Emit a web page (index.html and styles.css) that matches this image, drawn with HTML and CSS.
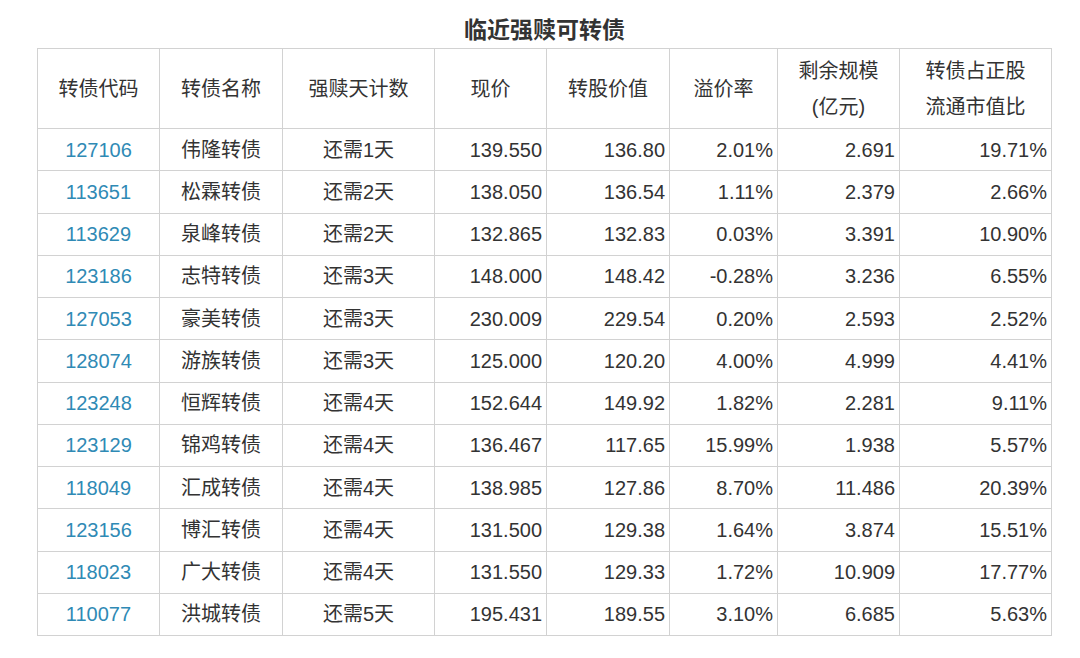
FILE: index.html
```html
<!DOCTYPE html>
<html lang="zh">
<head>
<meta charset="utf-8">
<title>临近强赎可转债</title>
<link rel="stylesheet" href="styles.css">
</head>
<body>
<div class="page">
  <div class="title">临近强赎可转债</div>
  <table class="bonds">
    <colgroup>
      <col class="c1"><col class="c2"><col class="c3"><col class="c4"><col class="c5"><col class="c6"><col class="c7"><col class="c8">
    </colgroup>
    <thead>
      <tr>
        <th>转债代码</th><th>转债名称</th><th>强赎天计数</th><th>现价</th><th>转股价值</th><th>溢价率</th><th>剩余规模<br>(亿元)</th><th>转债占正股<br>流通市值比</th>
      </tr>
    </thead>
    <tbody>
      <tr><td class="code">127106</td><td class="ctr">伟隆转债</td><td class="ctr">还需1天</td><td class="num">139.550</td><td class="num">136.80</td><td class="num">2.01%</td><td class="num">2.691</td><td class="num">19.71%</td></tr>
      <tr><td class="code">113651</td><td class="ctr">松霖转债</td><td class="ctr">还需2天</td><td class="num">138.050</td><td class="num">136.54</td><td class="num">1.11%</td><td class="num">2.379</td><td class="num">2.66%</td></tr>
      <tr><td class="code">113629</td><td class="ctr">泉峰转债</td><td class="ctr">还需2天</td><td class="num">132.865</td><td class="num">132.83</td><td class="num">0.03%</td><td class="num">3.391</td><td class="num">10.90%</td></tr>
      <tr><td class="code">123186</td><td class="ctr">志特转债</td><td class="ctr">还需3天</td><td class="num">148.000</td><td class="num">148.42</td><td class="num">-0.28%</td><td class="num">3.236</td><td class="num">6.55%</td></tr>
      <tr><td class="code">127053</td><td class="ctr">豪美转债</td><td class="ctr">还需3天</td><td class="num">230.009</td><td class="num">229.54</td><td class="num">0.20%</td><td class="num">2.593</td><td class="num">2.52%</td></tr>
      <tr><td class="code">128074</td><td class="ctr">游族转债</td><td class="ctr">还需3天</td><td class="num">125.000</td><td class="num">120.20</td><td class="num">4.00%</td><td class="num">4.999</td><td class="num">4.41%</td></tr>
      <tr><td class="code">123248</td><td class="ctr">恒辉转债</td><td class="ctr">还需4天</td><td class="num">152.644</td><td class="num">149.92</td><td class="num">1.82%</td><td class="num">2.281</td><td class="num">9.11%</td></tr>
      <tr><td class="code">123129</td><td class="ctr">锦鸡转债</td><td class="ctr">还需4天</td><td class="num">136.467</td><td class="num">117.65</td><td class="num">15.99%</td><td class="num">1.938</td><td class="num">5.57%</td></tr>
      <tr><td class="code">118049</td><td class="ctr">汇成转债</td><td class="ctr">还需4天</td><td class="num">138.985</td><td class="num">127.86</td><td class="num">8.70%</td><td class="num">11.486</td><td class="num">20.39%</td></tr>
      <tr><td class="code">123156</td><td class="ctr">博汇转债</td><td class="ctr">还需4天</td><td class="num">131.500</td><td class="num">129.38</td><td class="num">1.64%</td><td class="num">3.874</td><td class="num">15.51%</td></tr>
      <tr><td class="code">118023</td><td class="ctr">广大转债</td><td class="ctr">还需4天</td><td class="num">131.550</td><td class="num">129.33</td><td class="num">1.72%</td><td class="num">10.909</td><td class="num">17.77%</td></tr>
      <tr><td class="code">110077</td><td class="ctr">洪城转债</td><td class="ctr">还需5天</td><td class="num">195.431</td><td class="num">189.55</td><td class="num">3.10%</td><td class="num">6.685</td><td class="num">5.63%</td></tr>
    </tbody>
  </table>
</div>
</body>
</html>
```
FILE: styles.css
```css
html, body {
  margin: 0;
  padding: 0;
  background: #ffffff;
}
body {
  font-family: "Liberation Sans", "Noto Sans CJK SC", sans-serif;
  color: #333333;
}
.page {
  width: 1080px;
  height: 658px;
  overflow: hidden;
}
.title {
  height: 48px;
  box-sizing: border-box;
  padding-top: 12px;
  line-height: 36px;
  font-size: 23px;
  font-weight: bold;
  text-align: center;
  margin-left: 9px;
  color: #333333;
}
.bonds {
  margin-left: 37px;
  width: 1014px;
  border-collapse: collapse;
  table-layout: fixed;
  font-size: 20px;
}
.c1 { width: 122px; }
.c2 { width: 123px; }
.c3 { width: 152px; }
.c4 { width: 112px; }
.c5 { width: 123px; }
.c6 { width: 108px; }
.c7 { width: 122px; }
.c8 { width: 152px; }
.bonds th, .bonds td {
  border: 1px solid #d2d2d2;
  padding: 0 4px;
  white-space: nowrap;
  overflow: hidden;
}
.bonds th {
  height: 79px;
  font-weight: normal;
  line-height: 36px;
  text-align: center;
}
.bonds td {
  height: 41.25px;
  line-height: 24px;
}
.code {
  text-align: center;
  color: #2f8ab5;
}
.ctr {
  text-align: center;
}
.num {
  text-align: right;
}
```
